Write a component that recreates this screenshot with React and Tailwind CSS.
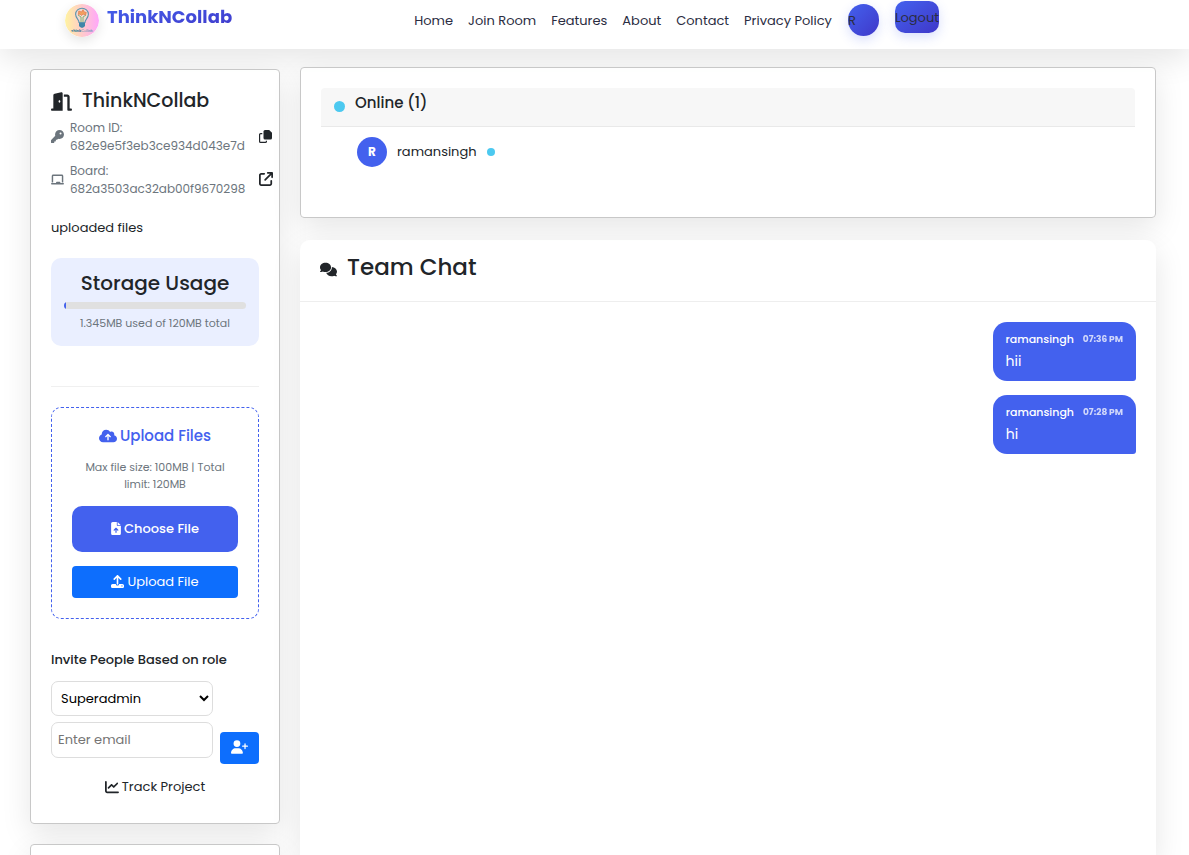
import React from "react";
import {
  FaDoorOpen, FaKey, FaChalkboard, FaArrowUpRightFromSquare, FaCloudArrowUp,
  FaFileArrowUp, FaUpload, FaUserPlus, FaChartLine, FaComments,
} from "react-icons/fa6";

const navLinks = ["Home", "Join Room", "Features", "About", "Contact", "Privacy Policy"];

const messages = [
  { id: 1, author: "ramansingh", time: "07:36 PM", text: "hii" },
  { id: 2, author: "ramansingh", time: "07:28 PM", text: "hi" },
];

function Logo() {
  return (
    <svg viewBox="0 0 34 33" className="h-[33px] w-[34px] rounded-full shadow-[0_4px_12px_rgba(0,0,0,0.1)]" aria-hidden="true">
      <defs>
        <linearGradient id="logo-bg" x1="0" x2="1" y1="0" y2="0">
          <stop offset="0" stopColor="#fff3a0" />
          <stop offset="0.45" stopColor="#ffcfc6" />
          <stop offset="1" stopColor="#ffa6fa" />
        </linearGradient>
      </defs>
      <ellipse cx="17" cy="16.500" rx="17" ry="16.500" fill="url(#logo-bg)" />
      <path d="M14 18.500c0-3-3.400-4.500-3.400-8.300A6.400 6.200 0 0 1 17 4.200a6.400 6.200 0 0 1 6.400 6c0 3.800-3.400 5.300-3.400 8.300z" fill="#f3d9cf" stroke="#5b94ad" strokeWidth="1.100" />
      <path d="M16 18v-5l-3-2M18 18v-5l3-2" fill="none" stroke="#84b27a" strokeWidth="1" />
      <path d="M13.300 10.500 13.800 7l2.700 1 1.500-2.300 1.300 2.300 2 .5-.8 2.500-2.500-1-1.500 1.500-1.500-1.500z" fill="#f3a05f" stroke="#e4794e" strokeWidth="0.700" />
      <path d="M14 19h6v2.800a1 1 0 0 1-1 1l-1 .9h-2l-1-.9a1 1 0 0 1-1-1z" fill="#3f86a8" />
      <text x="17" y="28" textAnchor="middle" fontSize="3.600" fill="#4f8fae" fontFamily="Poppins, Inter, sans-serif">
        <tspan fontWeight="700" fill="#3b7798">Think</tspan><tspan>Collab</tspan>
      </text>
    </svg>
  );
}

function CopyIcon() {
  return (
    <svg viewBox="0 0 13 13" className="size-[13px]" aria-hidden="true">
      <path d="M6 0h4.200L13 2.800V8a1.500 1.500 0 0 1-1.500 1.500H6A1.500 1.500 0 0 1 4.500 8V1.500A1.500 1.500 0 0 1 6 0z" fill="currentColor" />
      <path d="M3.300 3.700H1.600a1 1 0 0 0-1 1v6.700a1 1 0 0 0 1 1h4.800a1 1 0 0 0 1-1v-.7" fill="none" stroke="currentColor" strokeWidth="1.200" />
    </svg>
  );
}

function Header() {
  return (
    <header className="flex h-[49px] shrink-0 items-start bg-white pl-[65px] pr-[250px] shadow-[0_10px_30px_rgba(0,0,0,0.1)]">
      <a href="#home" className="flex items-start gap-2 pt-1">
        <Logo />
        <span className="bg-linear-to-br from-[#4361ee] to-[#3f37c9] bg-clip-text text-lg leading-[26px] font-bold text-transparent">ThinkNCollab</span>
      </a>
      <nav className="ml-auto flex items-start gap-4 text-[13px] leading-[34px] text-[#2b2d42]">
        <div className="mt-1 flex gap-[15px]">
          {navLinks.map((l) => (
            <a key={l} href="#nav" className="whitespace-nowrap">{l}</a>
          ))}
        </div>
        <a href="#profile" className="mt-1 h-8 w-[31px] rounded-full bg-linear-to-br from-[#4361ee] to-[#3f37c9] shadow-[0_4px_12px_rgba(67,97,238,0.2)]">R</a>
        <a href="#logout" className="mt-px h-8 rounded-[10px] bg-linear-to-br from-[#4361ee] to-[#3f37c9] shadow-[0_4px_12px_rgba(67,97,238,0.2)]">Logout</a>
      </nav>
    </header>
  );
}

function IdRow({ icon, label, value, action, actionLabel }) {
  return (
    <div className="flex items-center text-xs leading-[18px] text-[#6c757d]">
      <span className="shrink-0 pb-0.5">{icon}</span>
      <div className="ml-1.5 w-44 shrink-0">
        <div>{label}</div>
        <div className="whitespace-nowrap">{value}</div>
      </div>
      <button type="button" aria-label={actionLabel} className="ml-[13px] shrink-0 pb-0.5 text-[#212529]">{action}</button>
    </div>
  );
}

function Sidebar() {
  return (
    <aside className="flex w-[250px] shrink-0 flex-col gap-5 pt-5">
      <section className="rounded border border-[#c8c8c8] bg-white/90 px-5 pt-[19px] pb-[26px] shadow-[0_10px_30px_rgba(0,0,0,0.1)]">
        <h2 className="flex items-center gap-2.5 text-[19px] leading-6 font-medium">
          <FaDoorOpen className="size-[21px]" />ThinkNCollab
        </h2>
        <div className="mt-1.5 flex flex-col gap-[7px]">
          <IdRow icon={<FaKey className="size-[13px]" />} label="Room ID:" value="682e9e5f3eb3ce934d043e7d" action={<CopyIcon />} actionLabel="Copy room ID" />
          <IdRow icon={<FaChalkboard className="size-[13px]" />} label="Board:" value="682a3503ac32ab00f9670298" action={<FaArrowUpRightFromSquare className="size-[14px]" />} actionLabel="Open board" />
        </div>
        <a href="#files" className="mt-5 block text-[13px] leading-5">uploaded files</a>
        <div className="mt-5 rounded-[10px] bg-[#eaefff] px-[13px] pt-3 pb-3.5 text-center">
          <h3 className="text-xl leading-[26px] font-medium">Storage Usage</h3>
          <div className="mt-1.5 h-[7px] overflow-hidden rounded-full bg-[#e0e0e0]">
            <div className="h-full bg-[#4361ee]" style={{ width: `${(1.345 / 120) * 100}%` }} />
          </div>
          <p className="mt-1.5 text-[11px] leading-[17px] text-[#6c757d]">1.345MB used of 120MB total</p>
        </div>
        <hr className="mt-10 border-[#f0f0f0]" />
        <div className="mt-5 rounded-[10px] border border-dashed border-[#4361ee] p-5 text-center">
          <h4 className="-mt-1 flex items-center justify-center gap-[3px] text-[15px] leading-6 font-medium text-[#4361ee]">
            <FaCloudArrowUp className="size-[18px]" />Upload Files
          </h4>
          <p className="mt-[11px] text-[11px] leading-[17px] text-[#6c757d]">Max file size: 100MB | Total limit: 120MB</p>
          <button type="button" className="mt-[13px] flex h-[46px] w-full items-center justify-center gap-[3px] rounded-[10px] bg-[#4361ee] pb-px text-[13px] font-medium text-white">
            <FaFileArrowUp className="h-[13px] w-[10px]" />Choose File
          </button>
          <button type="button" className="mt-3.5 flex h-8 w-full items-center justify-center gap-[3px] rounded bg-[#0d6efd] pb-px text-[13px] text-white">
            <FaUpload className="size-[13px]" />Upload File
          </button>
        </div>
        <h4 className="mt-[31px] text-[13px] leading-5 font-medium">Invite People Based on role</h4>
        <form className="mt-[11px] flex items-end gap-[7px]" onSubmit={(e) => e.preventDefault()}>
          <div className="flex min-w-0 flex-1 flex-col gap-1.5">
            <select aria-label="Role" className="h-[35px] w-full rounded-[7px] border border-[#ddd] bg-white px-[5px] text-[13px] text-black">
              <option>Superadmin</option>
            </select>
            <input aria-label="Email" type="email" placeholder="Enter email" className="h-9 w-full rounded-[7px] border border-[#ddd] bg-white px-1.5 text-[13px] placeholder:text-[#757575]" />
          </div>
          <button type="submit" aria-label="Invite" className="-mb-1.5 flex h-8 w-[39px] items-center justify-center rounded bg-[#0d6efd] pb-0.5 text-white">
            <FaUserPlus className="h-[14px] w-[17px]" />
          </button>
        </form>
        <a href="#track" className="mt-[19px] flex items-center justify-center gap-[3px] text-[13px] leading-5">
          <FaChartLine className="size-[14px]" />Track Project
        </a>
      </section>
      <section className="h-40 shrink-0 rounded border border-[#c8c8c8] bg-white/90 shadow-[0_10px_30px_rgba(0,0,0,0.1)]" />
    </aside>
  );
}

function OnlinePanel() {
  return (
    <section className="rounded border border-[#c8c8c8] bg-white/90 p-5 pb-[42px] shadow-[0_10px_30px_rgba(0,0,0,0.1)]">
      <div className="flex h-[39px] items-center gap-2.5 rounded-t border-b border-[#e9e9e9] bg-[#f7f7f7] px-[13px] pb-px">
        <span className="size-[11px] rounded-full bg-[#4cc9f0]" />
        <h3 className="mb-2 text-[15px] leading-5 font-medium">Online (1)</h3>
      </div>
      <div className="flex items-center gap-2.5 pt-2.5 pb-2 pl-9">
        <span className="flex size-[30px] items-center justify-center rounded-full bg-[#4361ee] text-xs font-bold text-white">R</span>
        <span className="text-[13px] leading-5">ramansingh</span>
        <span className="size-2 rounded-full bg-[#4cc9f0]" />
      </div>
    </section>
  );
}

function ChatPanel() {
  return (
    <section className="flex-1 rounded-t-[10px] bg-white/90 shadow-[0_10px_30px_rgba(0,0,0,0.1)]">
      <h2 className="flex h-[62px] items-center gap-2.5 border-b border-[#eee] px-5 pb-1.5 text-[23px] font-medium">
        <FaComments className="mt-1 size-[17px]" />Team Chat
      </h2>
      <div className="flex flex-col items-end gap-3.5 p-5">
        {messages.map((m) => (
          <article key={m.id} className="h-[59px] rounded-[14px] rounded-br-[3px] bg-[#4361ee] px-[13px] pt-2 text-white">
            <div className="flex items-center gap-[9px] text-[11px] leading-[18px] font-medium">
              <span>{m.author}</span><time className="text-[9px] font-bold opacity-75">{m.time}</time>
            </div>
            <p className="mt-[3px] text-sm leading-5">{m.text}</p>
          </article>
        ))}
      </div>
    </section>
  );
}

export default function App() {
  return (
    <div className="flex h-screen flex-col overflow-hidden bg-white font-['Poppins','Inter',sans-serif] text-[#212529]">
      <Header />
      <div className="flex min-h-0 flex-1 gap-5 pr-[33px] pl-[30px]">
        <Sidebar />
        <main className="flex min-w-0 flex-1 flex-col gap-[22px] pt-[18px]">
          <OnlinePanel />
          <ChatPanel />
        </main>
      </div>
    </div>
  );
}
